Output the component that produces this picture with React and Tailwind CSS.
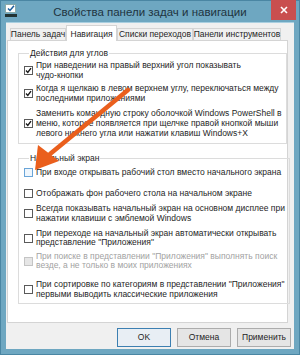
import React from "react";

const font = "font-['Liberation_Sans',Arial,sans-serif]";

function Check({ checked, hover, disabled }) {
  const border = disabled
    ? "border-[#c4c4c4] bg-[#e6e6e6]"
    : hover
    ? "border-[#6aa5d8] bg-[#eef6fd]"
    : "border-[#5a5a5a] bg-white";
  return (
    <div className={`w-[9px] h-[9px] shrink-0 border ${border} flex items-center justify-center`}>
      {checked && (
        <svg width="7" height="7" viewBox="0 0 7 7">
          <path d="M1 3.6 L2.8 5.4 L6 1.2" fill="none" stroke="#1a1a1a" strokeWidth="1.4" />
        </svg>
      )}
    </div>
  );
}

function Item({ lines, checked, hover, disabled, className = "" }) {
  return (
    <div className={`flex items-center gap-[3px] ${className}`}>
      <Check checked={checked} hover={hover} disabled={disabled} />
      <div className={`leading-[9.6px] whitespace-nowrap ${disabled ? "text-[#a2a2a2]" : "text-[#1e1e1e]"}`}>
        {lines.map((l, i) => (
          <div key={i}>{l}</div>
        ))}
      </div>
    </div>
  );
}

function Group({ title, children, className = "" }) {
  return (
    <fieldset className={`border border-[#dcdcdc] pl-[5px] pr-[4px] ${className}`}>
      <legend className="ml-[5px] px-[1px] leading-[10px] text-[#1e1e1e]">{title}</legend>
      {children}
    </fieldset>
  );
}

function Tab({ label, active, w }) {
  return active ? (
    <div className={`${w} shrink-0 h-[16px] -mb-px bg-white border border-b-0 border-[#d4d4d4] flex justify-center items-start pt-[2px] relative z-10 text-[#1e1e1e] whitespace-nowrap`}>
      {label}
    </div>
  ) : (
    <div className={`${w} shrink-0 h-[12px] bg-[#f0f0f0] border border-b-0 border-[#d4d4d4] flex justify-center items-center text-[#1e1e1e] whitespace-nowrap`}>
      {label}
    </div>
  );
}

function Btn({ label, primary }) {
  return (
    <div
      className={`w-[54px] h-[19px] flex items-center justify-center border text-[#1e1e1e] ${
        primary ? "border-[#3c7fb1] bg-[#e8eef4]" : "border-[#acacac] bg-[#e5e5e5]"
      }`}
    >
      {label}
    </div>
  );
}

export default function App() {
  return (
    <div className={`${font} text-[8.5px] w-[300px] h-[355px] relative bg-[#6ea7c1] border border-[#4a86a3] flex flex-col`}>
      {/* TITLE BAR */}
      <div className="h-[21px] flex items-start relative">
        <div className="absolute left-[4px] top-[3px] w-[13px] h-[14px]">
          <div className="w-[11px] h-[9px] bg-white border border-[#8aa] flex items-center justify-center">
            <svg width="8" height="7" viewBox="0 0 8 7">
              <path d="M1 3.5 L3 5.5 L7 0.8" fill="none" stroke="#1d5e9c" strokeWidth="1.5" />
            </svg>
          </div>
          <div className="mt-[1px] w-[12px] h-[3px] bg-[#233]" />
        </div>
        <div className="flex-1 text-center text-[11.5px] leading-[22px] text-[#1f3440]">
          Свойства панели задач и навигации
        </div>
        <div className="absolute right-[3px] top-[-1px] w-[25px] h-[20px] bg-[#c94f4f] flex items-center justify-center">
          <svg width="8" height="8" viewBox="0 0 8 8">
            <path d="M1 1 L7 7 M7 1 L1 7" stroke="white" strokeWidth="1.6" />
          </svg>
        </div>
      </div>

      {/* BODY */}
      <div className="mx-[5px] h-[327px] bg-[#f0f0f0] border-t border-[#a9cfe0] flex flex-col">
        {/* TABS */}
        <div className="h-[17px] pl-[4px] flex items-end">
          <Tab w="w-[56px]" label="Панель задач" />
          <Tab w="w-[51px]" label="Навигация" active />
          <Tab w="w-[76px]" label="Списки переходов" />
          <Tab w="w-[88px]" label="Панели инструментов" />
        </div>

        {/* PANEL */}
        <div className="ml-[1px] w-[281px] h-[283px] bg-white border border-[#d4d4d4] pl-[10px] pr-[5px] pt-[7px]">
          <Group title="Действия для углов" className="pb-[5px]">
            <Item
              className="mt-[3px]"
              checked
              lines={["При наведении на правый верхний угол показывать", "чудо-кнопки"]}
            />
            <Item
              className="mt-[4px]"
              checked
              lines={["Когда я щелкаю в левом верхнем углу, переключаться между", "последними приложениями"]}
            />
            <Item
              className="mt-[6px]"
              checked
              lines={[
                "Заменить командную строку оболочкой Windows PowerShell в",
                "меню, которое появляется при щелчке правой кнопкой мыши",
                "левого нижнего угла или нажатии клавиш Windows+X",
              ]}
            />
          </Group>

          <Group title="Начальный экран" className="mt-[9px] pb-[4px]">
            <Item className="mt-[5px]" hover lines={["При входе открывать рабочий стол вместо начального экрана"]} />
            <Item className="mt-[11px]" lines={["Отображать фон рабочего стола на начальном экране"]} />
            <Item
              className="mt-[6px]"
              lines={["Всегда показывать начальный экран на основном дисплее при", "нажатии клавиши с эмблемой Windows"]}
            />
            <Item
              className="mt-[5px]"
              lines={["При переходе на начальный экран автоматически открывать", "представление \"Приложения\""]}
            />
            <Item
              className="mt-[4px]"
              disabled
              lines={["При поиске в представлении \"Приложения\" выполнять поиск", "везде, а не только в моих приложениях"]}
            />
            <Item
              className="mt-[9px]"
              lines={["При сортировке по категориям в представлении \"Приложения\"", "первыми выводить классические приложения"]}
            />
          </Group>
        </div>

        {/* BUTTONS */}
        <div className="mt-[5px] pr-[3px] flex justify-end gap-[6px]">
          <Btn label="OK" primary />
          <Btn label="Отмена" />
          <Btn label="Применить" />
        </div>
      </div>

      {/* ARROW OVERLAY */}
      <svg className="absolute left-[-1px] top-[-1px] pointer-events-none" width="300" height="355" viewBox="0 0 300 355">
        <line x1="128" y1="90" x2="50" y2="154" stroke="#ea5f1d" strokeWidth="4.5" strokeLinecap="round" />
        <polygon points="35,170 38,145 59,161" fill="#ea5f1d" />
      </svg>
    </div>
  );
}
